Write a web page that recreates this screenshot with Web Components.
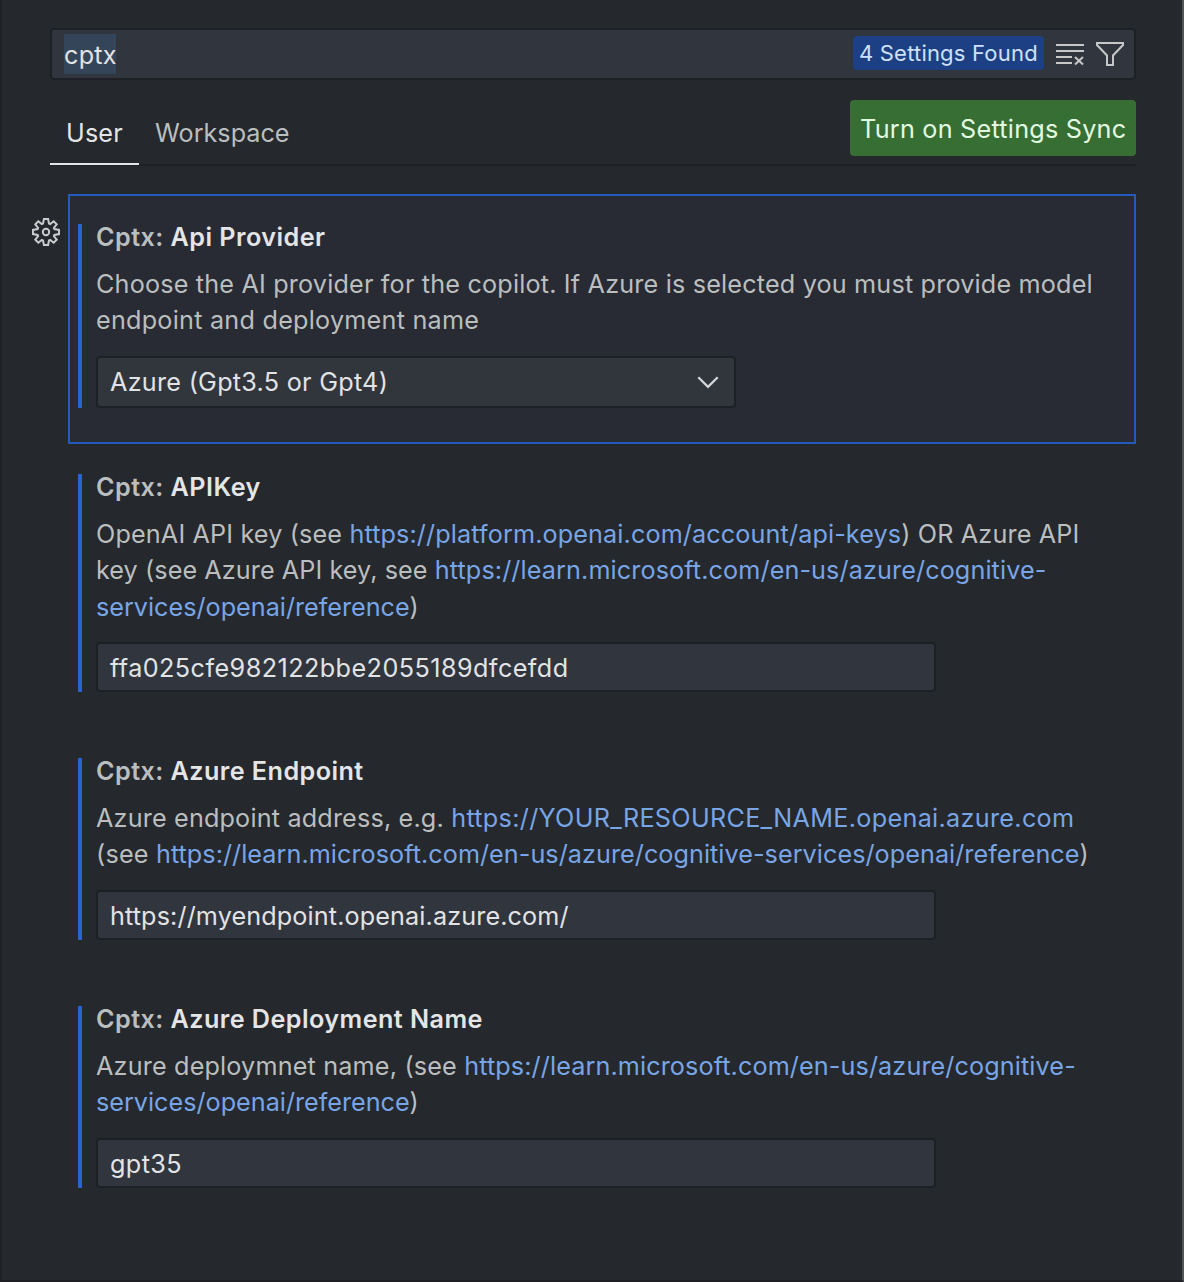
<!DOCTYPE html>
<html lang="en"><head><meta charset="utf-8"><title>Settings</title>
<style>
html,body{margin:0;height:100%;background:#25282c}
body{font-family:Inter,"Liberation Sans",sans-serif;font-size:25.2px;font-weight:440;color:#bbbebf}
b{font-weight:600;color:#e4e5e7}
a{color:#78a5e6;text-decoration:none;letter-spacing:var(--la,inherit)}
</style></head><body>
<settings-editor>
 <search-box slot="search" count="4 Settings Found" style="--ls:.25px;--cs:.2px">cptx</search-box>
 <scope-tabs slot="tabs" style="--a:.15px"><span slot="active">User</span><span slot="other">Workspace</span><sync-button slot="action" style="--ls:.24px">Turn on Settings Sync</sync-button></scope-tabs>
 <setting-item focused style="--h:184px">
  <text-line slot="title" style="--ls:.45px">Cptx: <b>Api Provider</b></text-line>
  <text-line style="--ls:.18px">Choose the AI provider for the copilot. If Azure is selected you must provide model</text-line>
  <text-line style="--ls:.24px">endpoint and deployment name</text-line>
  <select-box slot="control" style="--ls:.27px">Azure (Gpt3.5 or Gpt4)</select-box>
 </setting-item>
 <setting-item style="--h:218px">
  <text-line slot="title" style="--ls:.45px">Cptx: <b>APIKey</b></text-line>
  <text-line style="--ls:.15px;--la:.12px">OpenAI API key (see <a>https://platform.openai.com/account/api-keys</a>) OR Azure API</text-line>
  <text-line style="--ls:.08px;--la:.11px">key (see Azure API key, see <a>https://learn.microsoft.com/en-us/azure/cognitive-</a></text-line>
  <text-line><a>services/openai/reference</a>)</text-line>
  <text-box slot="control" style="--ls:.44px">ffa025cfe982122bbe2055189dfcefdd</text-box>
 </setting-item>
 <setting-item style="--h:182px">
  <text-line slot="title" style="--ls:.44px">Cptx: <b>Azure Endpoint</b></text-line>
  <text-line style="--ls:.17px;--la:.31px">Azure endpoint address, e.g. <a>https://YOUR_RESOURCE_NAME.openai.azure.com</a></text-line>
  <text-line style="--ls:.2px;--la:.05px">(see <a>https://learn.microsoft.com/en-us/azure/cognitive-services/openai/reference</a>)</text-line>
  <text-box slot="control" style="--ls:.12px">https://myendpoint.openai.azure.com/</text-box>
 </setting-item>
 <setting-item style="--h:182px">
  <text-line slot="title" style="--ls:.44px">Cptx: <b>Azure Deployment Name</b></text-line>
  <text-line style="--ls:.17px;--la:.11px">Azure deploymnet name, (see <a>https://learn.microsoft.com/en-us/azure/cognitive-</a></text-line>
  <text-line><a>services/openai/reference</a>)</text-line>
  <text-box slot="control" style="--ls:.4px">gpt35</text-box>
 </setting-item>
</settings-editor>
<script>
function define(name, html){
  const t=document.createElement('template'); t.innerHTML=html;
  customElements.define(name, class extends HTMLElement{
    constructor(){super();this.attachShadow({mode:'open'}).append(t.content.cloneNode(true));}
    connectedCallback(){const c=this.shadowRoot.querySelector('.count');if(c)c.textContent=this.getAttribute('count');}
  });
}
define('text-line',`<style>:host{display:block;white-space:nowrap;letter-spacing:var(--ls,0)}</style><slot></slot>`);
define('settings-editor',`<style>
:host{display:flex;flex-direction:column;box-sizing:border-box;height:1282px;border-left:2px solid #1e2226;border-right:2px solid #515355;border-bottom:2px solid #1e1f24;padding:28px 46px 0 48px;overflow:hidden}
.list{display:flex;flex-direction:column;margin:28px 0 0 18px}
</style><slot name="search"></slot><slot name="tabs"></slot><div class="list"><slot></slot></div>`);
define('search-box',`<style>
:host{display:flex;align-items:center;box-sizing:border-box;height:52px;border:2px solid #1d2125;border-radius:4px;background:#31353d;padding:0 10px 0 12px;color:#e2e3e5}
.sel{background:#34455a;height:40px;line-height:42px;width:52px;white-space:nowrap;letter-spacing:var(--ls,0)}
.count{margin-left:auto;background:#1c4083;color:#cfe0fa;border-radius:4px;height:34px;line-height:35px;width:191px;box-sizing:border-box;padding-left:6px;font-size:22px;margin-top:-2px;white-space:nowrap;letter-spacing:var(--cs,.3px)}
svg{display:block;flex:none}
</style><span class="sel"><slot></slot></span><span class="count"></span>
<svg style="margin-left:12px" width="28" height="28" viewBox="0 0 28 28" fill="none" stroke="#c5c7c8" stroke-width="2"><path d="M0 5H28M0 11H28M0 17H16M0 23H16M19 17L27 24.5M27 17L19 24.5"/></svg>
<svg style="margin-left:12px" width="28" height="28" viewBox="0 0 28 28" fill="none" stroke="#c5c7c8" stroke-width="2"><path d="M1 3H27V5L17 15.5V25H11V15.5L1 5Z"/></svg>`);
define('scope-tabs',`<style>
:host{display:flex;box-sizing:border-box;height:86px;border-bottom:2px solid #1d2125;padding-top:20px}
.a,.o{box-sizing:border-box;height:65px;line-height:67px;white-space:nowrap}
.a{width:89px;padding-left:16px;border-bottom:2px solid #e2e6e8;color:#e4e5e7;letter-spacing:var(--a,0)}
.o{padding-left:16px;letter-spacing:var(--o,0)}
.x{margin-left:auto}
</style><div class="a"><slot name="active"></slot></div><div class="o"><slot name="other"></slot></div><div class="x"><slot name="action"></slot></div>`);
define('sync-button',`<style>:host{display:block;box-sizing:border-box;width:286px;height:56px;line-height:58px;padding-left:10px;border-radius:4px;background:#376e34;color:#e2fbe0;white-space:nowrap;letter-spacing:var(--ls,0)}</style><slot></slot>`);
define('setting-item',`<style>
:host{display:block;position:relative;box-sizing:border-box;padding:30px 0 36px 10px}
:host([focused]){background:#282b33;box-shadow:inset 0 0 0 2px #245abb}
.gear{display:none;position:absolute;left:-37px;top:23px}
:host([focused]) .gear{display:block}
.body{display:flex;flex-direction:column;box-sizing:border-box;height:var(--h);border-left:4px solid #2963cd;padding-left:14px}
.title{font-weight:600;line-height:26px;margin-bottom:16px}
.desc{line-height:36.4px}
.control{margin-top:auto}
</style><svg class="gear" width="30" height="30" viewBox="-15 -15 30 30" fill="none" stroke="#c9cbcd" stroke-width="2" stroke-linejoin="miter"><path d="M-2.1-13H2.1L3-8.4L4.2-7.9L7.7-10.7L10.7-7.7L7.9-4.2L8.4-3L13-2.1V2.1L8.4 3L7.9 4.2L10.7 7.7L7.7 10.7L4.2 7.9L3 8.4L2.1 13H-2.1L-3 8.4L-4.2 7.9L-7.7 10.7L-10.7 7.7L-7.9 4.2L-8.4 3L-13 2.1V-2.1L-8.4-3L-7.9-4.2L-10.7-7.7L-7.7-10.7L-4.2-7.9L-3-8.4Z"/><circle r="3.2"/></svg>
<div class="body"><div class="title"><slot name="title"></slot></div><div class="desc"><slot></slot></div><div class="control"><slot name="control"></slot></div></div>`);
define('select-box',`<style>:host{display:flex;align-items:center;justify-content:space-between;box-sizing:border-box;width:640px;height:52px;border:2px solid #1d2125;border-radius:4px;background:#31353c;padding:0 15px 0 12px;color:#e2e3e5;white-space:nowrap;letter-spacing:var(--ls,0)}</style><span><slot></slot></span><svg width="22" height="14" viewBox="0 0 22 14" fill="none" stroke="#d3d5d7" stroke-width="2.3"><path d="M1.3 2.2L11 11.9L20.7 2.2"/></svg>`);
define('text-box',`<style>:host{display:block;box-sizing:border-box;width:840px;height:50px;line-height:48px;border:2px solid #1d2125;border-radius:4px;background:#31353d;padding-left:12px;color:#e2e3e5;white-space:nowrap;letter-spacing:var(--ls,0)}</style><slot></slot>`);
</script>
</body></html>
